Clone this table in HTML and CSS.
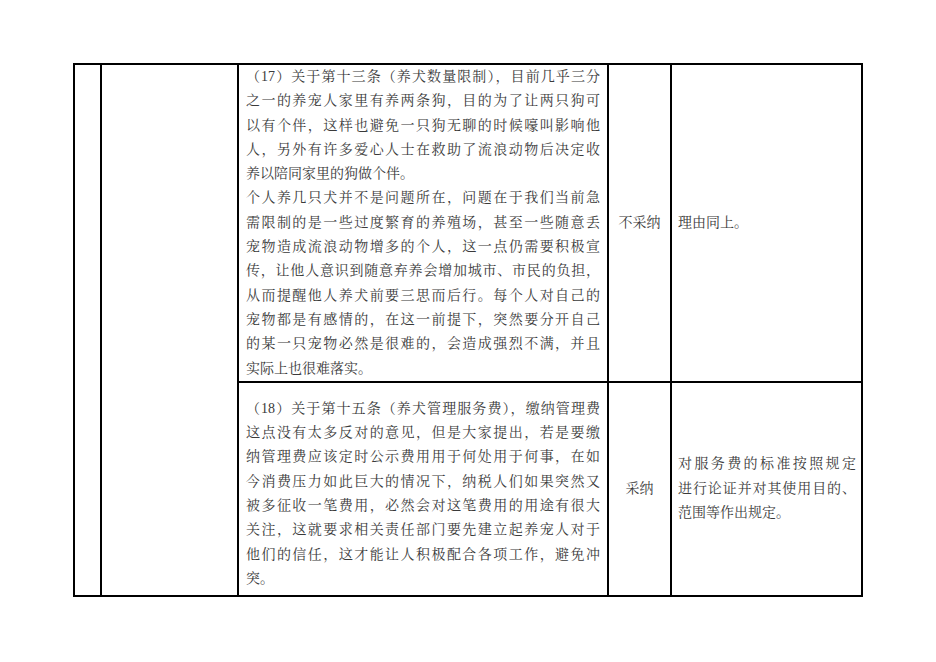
FILE: index.html
```html
<!DOCTYPE html>
<html lang="zh-CN">
<head>
<meta charset="utf-8">
<title>意见采纳情况表</title>
<link rel="stylesheet" href="styles.css">
</head>
<body>
<div class="page">
  <table class="sheet">
    <colgroup>
      <col class="c-no">
      <col class="c-src">
      <col class="c-opinion">
      <col class="c-verdict">
      <col class="c-reason">
    </colgroup>
    <tr class="row-a">
      <td rowspan="2"></td>
      <td rowspan="2"></td>
      <td class="opinion">
        <div class="ln j">（17）关于第十三条（养犬数量限制），目前几乎三分</div>
        <div class="ln j">之一的养宠人家里有养两条狗，目的为了让两只狗可</div>
        <div class="ln j">以有个伴，这样也避免一只狗无聊的时候嚎叫影响他</div>
        <div class="ln j">人，另外有许多爱心人士在救助了流浪动物后决定收</div>
        <div class="ln">养以陪同家里的狗做个伴。</div>
        <div class="ln j">个人养几只犬并不是问题所在，问题在于我们当前急</div>
        <div class="ln j">需限制的是一些过度繁育的养殖场，甚至一些随意丢</div>
        <div class="ln j">宠物造成流浪动物增多的个人，这一点仍需要积极宣</div>
        <div class="ln j">传，让他人意识到随意弃养会增加城市、市民的负担，</div>
        <div class="ln j">从而提醒他人养犬前要三思而后行。每个人对自己的</div>
        <div class="ln j">宠物都是有感情的，在这一前提下，突然要分开自己</div>
        <div class="ln j">的某一只宠物必然是很难的，会造成强烈不满，并且</div>
        <div class="ln">实际上也很难落实。</div>
      </td>
      <td class="verdict">不采纳</td>
      <td class="reason">理由同上。</td>
    </tr>
    <tr class="row-b">
      <td class="opinion opinion-b">
        <div class="ln j">（18）关于第十五条（养犬管理服务费），缴纳管理费</div>
        <div class="ln j">这点没有太多反对的意见，但是大家提出，若是要缴</div>
        <div class="ln j">纳管理费应该定时公示费用用于何处用于何事，在如</div>
        <div class="ln j">今消费压力如此巨大的情况下，纳税人们如果突然又</div>
        <div class="ln j">被多征收一笔费用，必然会对这笔费用的用途有很大</div>
        <div class="ln j">关注，这就要求相关责任部门要先建立起养宠人对于</div>
        <div class="ln j">他们的信任，这才能让人积极配合各项工作，避免冲</div>
        <div class="ln">突。</div>
      </td>
      <td class="verdict">采纳</td>
      <td class="reason">
        <div class="ln j">对服务费的标准按照规定</div>
        <div class="ln j">进行论证并对其使用目的、</div>
        <div class="ln">范围等作出规定。</div>
      </td>
    </tr>
  </table>
</div>
</body>
</html>
```

FILE: styles.css
```css
html, body {
  margin: 0;
  padding: 0;
  background: #ffffff;
}

body {
  font-family: "Liberation Serif", "Noto Serif CJK SC", "Noto Sans CJK SC", serif;
  font-size: 14px;
  color: #3a3a3a;
}

.page {
  padding: 63px 0 0 73px;
}

.sheet {
  border-collapse: collapse;
  table-layout: fixed;
  width: 788px;
}

.sheet td {
  border: 2px solid #000000;
  padding: 0;
  vertical-align: top;
}

.c-no { width: 27px; }
.c-src { width: 137px; }
.c-opinion { width: 370px; }
.c-verdict { width: 63px; }
.c-reason { width: 191px; }

.row-a { height: 317px; }
.row-b { height: 214px; }

.ln {
  line-height: 24.3px;
  white-space: nowrap;
}

.ln.j {
  white-space: normal;
  text-align: justify;
  text-align-last: justify;
}

.opinion {
  padding: 0 7px 0 7px !important;
}

.opinion-b {
  padding-top: 14px !important;
}

.verdict {
  text-align: center;
  vertical-align: middle !important;
  line-height: 24.3px;
}

.reason {
  vertical-align: middle !important;
  padding: 0 5px 0 6px !important;
  line-height: 24.3px;
}
```
